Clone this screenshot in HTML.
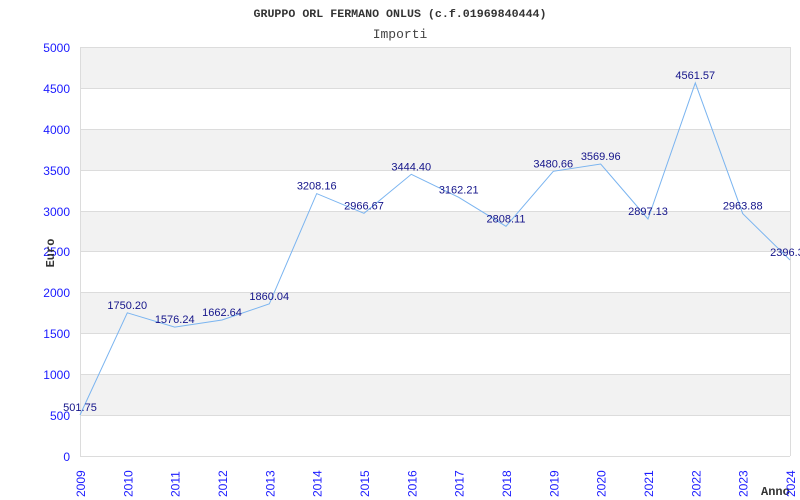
<!DOCTYPE html>
<html><head><meta charset="utf-8"><style>body{margin:0;background:#fff}svg{display:block}</style></head><body>
<svg width="800" height="500" xmlns="http://www.w3.org/2000/svg">
<rect width="800" height="500" fill="#fff"/>
<g fill="#f2f2f2">
<rect x="80" y="47" width="710" height="41"/>
<rect x="80" y="129" width="710" height="41"/>
<rect x="80" y="211" width="710" height="41"/>
<rect x="80" y="292" width="710" height="41"/>
<rect x="80" y="374" width="710" height="41"/>
</g>
<g stroke="#dcdcdc" stroke-width="1">
<line x1="80" y1="47.5" x2="790" y2="47.5"/>
<line x1="80" y1="88.5" x2="790" y2="88.5"/>
<line x1="80" y1="129.5" x2="790" y2="129.5"/>
<line x1="80" y1="170.5" x2="790" y2="170.5"/>
<line x1="80" y1="211.5" x2="790" y2="211.5"/>
<line x1="80" y1="251.5" x2="790" y2="251.5"/>
<line x1="80" y1="292.5" x2="790" y2="292.5"/>
<line x1="80" y1="333.5" x2="790" y2="333.5"/>
<line x1="80" y1="374.5" x2="790" y2="374.5"/>
<line x1="80" y1="415.5" x2="790" y2="415.5"/>
<line x1="80" y1="456.5" x2="790" y2="456.5"/>
<line x1="80.5" y1="47" x2="80.5" y2="456"/>
<line x1="790.5" y1="47" x2="790.5" y2="456"/>
</g>
<text x="400" y="17" text-anchor="middle" font-family="Liberation Mono,monospace" font-weight="bold" font-size="11" fill="#333" textLength="293" lengthAdjust="spacingAndGlyphs">GRUPPO ORL FERMANO ONLUS (c.f.01969840444)</text>
<text x="400" y="38" text-anchor="middle" font-family="Liberation Mono,monospace" font-size="13" fill="#444">Importi</text>
<g font-family="Liberation Sans,sans-serif" font-size="12" fill="#1a1aff" text-anchor="end">
<text x="70" y="52">5000</text><text x="70" y="93">4500</text><text x="70" y="134">4000</text><text x="70" y="175">3500</text><text x="70" y="216">3000</text><text x="70" y="256">2500</text><text x="70" y="297">2000</text><text x="70" y="338">1500</text><text x="70" y="379">1000</text><text x="70" y="420">500</text><text x="70" y="461">0</text>
</g>
<text transform="translate(54,253) rotate(-90)" text-anchor="middle" font-family="Liberation Mono,monospace" font-weight="bold" font-size="12" fill="#333">Euro</text>
<text x="761" y="495" font-family="Liberation Mono,monospace" font-weight="bold" font-size="12" fill="#333">Anno</text>
<g font-family="Liberation Sans,sans-serif" font-size="12" fill="#1a1aff">
<text transform="translate(85,497) rotate(-90)">2009</text>
<text transform="translate(132.3,497) rotate(-90)">2010</text>
<text transform="translate(179.7,497) rotate(-90)">2011</text>
<text transform="translate(227,497) rotate(-90)">2012</text>
<text transform="translate(274.3,497) rotate(-90)">2013</text>
<text transform="translate(321.7,497) rotate(-90)">2014</text>
<text transform="translate(369,497) rotate(-90)">2015</text>
<text transform="translate(416.3,497) rotate(-90)">2016</text>
<text transform="translate(463.7,497) rotate(-90)">2017</text>
<text transform="translate(511,497) rotate(-90)">2018</text>
<text transform="translate(558.3,497) rotate(-90)">2019</text>
<text transform="translate(605.7,497) rotate(-90)">2020</text>
<text transform="translate(653,497) rotate(-90)">2021</text>
<text transform="translate(700.3,497) rotate(-90)">2022</text>
<text transform="translate(747.7,497) rotate(-90)">2023</text>
<text transform="translate(795,497) rotate(-90)">2024</text>
</g>
<polyline fill="none" stroke="#7ab4f0" stroke-width="1" points="80,415 127.3,312.8 174.7,327.1 222,320 269.3,303.9 316.7,193.6 364,213.3 411.3,174.3 458.7,197.3 506,226.3 553.3,171.3 600.7,164 648,219 695.3,82.9 742.7,213.6 790,260"/>
<g font-family="Liberation Sans,sans-serif" font-size="11" fill="#14148a" text-anchor="middle">
<text x="80" y="411">501.75</text>
<text x="127.3" y="308.8">1750.20</text>
<text x="174.7" y="323.1">1576.24</text>
<text x="222" y="316">1662.64</text>
<text x="269.3" y="299.9">1860.04</text>
<text x="316.7" y="189.6">3208.16</text>
<text x="364" y="209.3">2966.67</text>
<text x="411.3" y="170.3">3444.40</text>
<text x="458.7" y="193.3">3162.21</text>
<text x="506" y="222.3">2808.11</text>
<text x="553.3" y="167.3">3480.66</text>
<text x="600.7" y="160">3569.96</text>
<text x="648" y="215">2897.13</text>
<text x="695.3" y="78.9">4561.57</text>
<text x="742.7" y="209.6">2963.88</text>
<text x="790" y="256">2396.30</text>
</g>
</svg>
</body></html>
